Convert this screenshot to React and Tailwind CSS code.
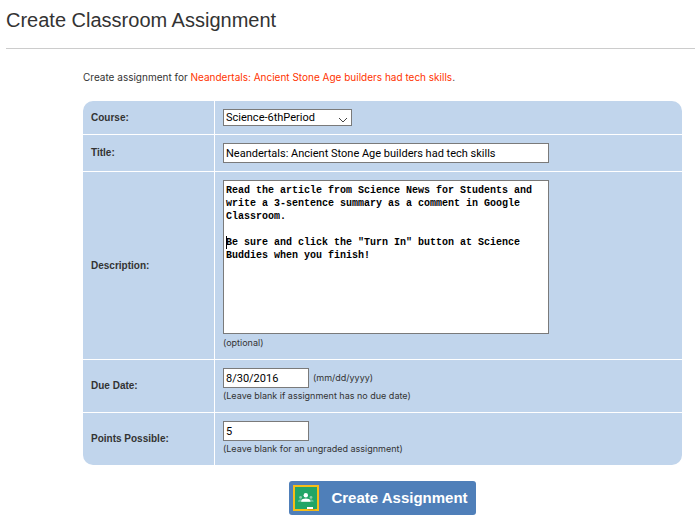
import React, { useState } from 'react';

const ClassroomIcon = () => (
  <svg viewBox="0 0 26 26" className="size-[26px] shrink-0" aria-hidden="true">
    <rect width="26" height="26" fill="#f7bd17" />
    <rect x="2" y="2" width="22" height="22" fill="#23a566" />
    <circle cx="7.6" cy="12.4" r="1.4" fill="#8ccfae" />
    <circle cx="18" cy="12.4" r="1.4" fill="#8ccfae" />
    <path d="M5 16.8v-.6c0-1.2 1.4-1.7 2.8-1.7h10c1.4 0 2.8.5 2.8 1.7v.6z" fill="#6cc298" />
    <circle cx="12.8" cy="10.2" r="2.2" fill="#fff" />
    <path d="M8.2 16.8v-.9c0-1.7 2.4-2.5 4.6-2.5s4.6.8 4.6 2.5v.9z" fill="#fff" />
    <rect x="14" y="22" width="6" height="2" fill="#fff" />
    <path d="M14 24h7l2 1.2h-7z" fill="#d99f12" />
  </svg>
);

const Row = ({ id, label, children }) => (
  <div className="grid grid-cols-[131px_1fr] gap-px">
    <label htmlFor={id} className="flex items-center bg-[#c1d5ec] px-2 text-[10px] leading-4 font-bold">
      {label}
    </label>
    <div className="bg-[#c1d5ec] p-2">{children}</div>
  </div>
);

const inputClass =
  "block h-5 border border-[#7a7a7a] bg-white px-0.5 font-['Roboto',sans-serif] text-[11px] leading-4 text-black rounded-none outline-none";

const hintClass = "font-['Inter',sans-serif] text-[9px] leading-4";

const App = () => {
  const [form, setForm] = useState({
    course: 'Science-6thPeriod',
    title: 'Neandertals: Ancient Stone Age builders had tech skills',
    description:
      'Read the article from Science News for Students and write a 3-sentence summary as a comment in Google Classroom.\n\nBe sure and click the "Turn In" button at Science Buddies when you finish!',
    dueDate: '8/30/2016',
    points: '5',
  });

  const handleChange = (e) => {
    setForm({ ...form, [e.target.name]: e.target.value });
  };

  return (
    <div className="min-h-screen bg-white pt-1 font-['Liberation_Sans',Arial,sans-serif] text-[#333]">
      <h1 className="ml-1.5 border-b border-[#ccc] pb-3 text-[20px] leading-8">Create Classroom Assignment</h1>

      <form onSubmit={(e) => e.preventDefault()} className="mt-5 ml-[83px] mr-[13px]">
        <p className="font-['Inter',sans-serif] text-[10px] leading-4">
          Create assignment for{' '}
          <a href="#article" className="text-[#ff3300]">
            Neandertals: Ancient Stone Age builders had tech skills
          </a>
          .
        </p>

        <div className="mt-4 flex flex-col gap-px overflow-hidden rounded-[10px]">
          <Row id="course" label="Course:">
            <div className="relative w-[129px]">
              <select
                id="course"
                name="course"
                value={form.course}
                onChange={handleChange}
                className="block h-[17px] w-full appearance-none rounded-none border border-[#7a7a7a] bg-white px-0.5 font-['Roboto',sans-serif] text-[11px] leading-[15px] text-black outline-none"
              >
                <option>Science-6thPeriod</option>
              </select>
              <svg viewBox="0 0 10 6" className="pointer-events-none absolute top-2 right-1 h-1.5 w-2.5" aria-hidden="true">
                <path d="M1 1L5 5L9 1" fill="none" stroke="#444" />
              </svg>
            </div>
          </Row>

          <Row id="title" label="Title:">
            <input id="title" name="title" type="text" value={form.title} onChange={handleChange} className={`${inputClass} w-[326px]`} />
          </Row>

          <Row id="description" label="Description:">
            <div className="relative w-[326px]">
              <textarea
                id="description"
                name="description"
                value={form.description}
                onChange={handleChange}
                className="block h-[154px] w-full resize-none rounded-none border border-[#7a7a7a] bg-white px-0.5 py-[3px] font-['Liberation_Mono','Courier_New',monospace] text-[10px] leading-[13px] font-bold text-black outline-none"
              />
              {/* Text caret */}
              <span className="pointer-events-none absolute top-14 left-[3px] h-[13px] w-px bg-black" />
            </div>
            <p className={`${hintClass} pt-px`}>(optional)</p>
          </Row>

          <Row id="dueDate" label="Due Date:">
            <div className="flex items-center gap-1">
              <input id="dueDate" name="dueDate" type="text" value={form.dueDate} onChange={handleChange} className={`${inputClass} w-[86px]`} />
              <span className={hintClass}>(mm/dd/yyyy)</span>
            </div>
            <p className={hintClass}>(Leave blank if assignment has no due date)</p>
          </Row>

          <Row id="points" label="Points Possible:">
            <input id="points" name="points" type="text" value={form.points} onChange={handleChange} className={`${inputClass} w-[86px]`} />
            <p className={hintClass}>(Leave blank for an ungraded assignment)</p>
          </Row>
        </div>

        <div className="mt-4 flex justify-center">
          <button type="submit" className="flex items-center gap-3 rounded-[3px] bg-[#4f7fb9] py-1 pr-2 pl-1 text-[15px] font-bold text-white">
            <ClassroomIcon />
            Create Assignment
          </button>
        </div>
      </form>
    </div>
  );
};

export default App;
